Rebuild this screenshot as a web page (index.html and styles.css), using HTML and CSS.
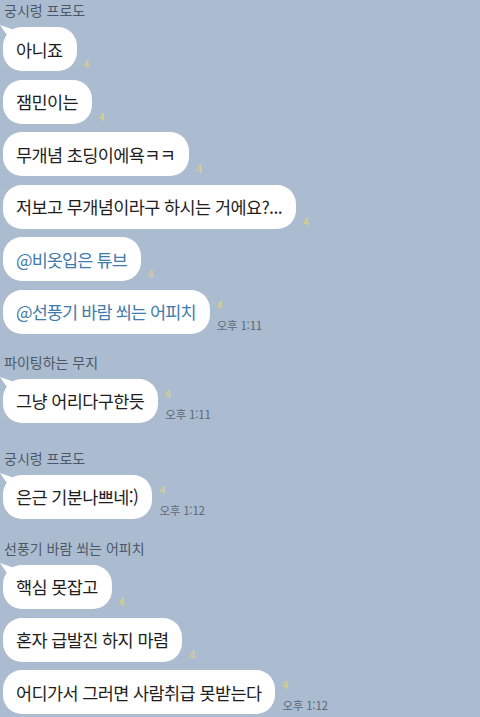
FILE: index.html
```html
<!DOCTYPE html>
<html lang="ko">
<head>
<meta charset="utf-8">
<link rel="stylesheet" href="styles.css">
</head>
<body>
<div class="chat">
  <div class="group g1">
    <div class="name">궁시렁 프로도</div>
    <div class="row tail"><div class="bubble">아니죠</div><div class="meta"><span class="read">4</span></div></div>
    <div class="row"><div class="bubble">잼민이는</div><div class="meta"><span class="read">4</span></div></div>
    <div class="row"><div class="bubble">무개념 초딩이에욕ㅋㅋ</div><div class="meta"><span class="read">4</span></div></div>
    <div class="row"><div class="bubble">저보고 무개념이라구 하시는 거에요?...</div><div class="meta"><span class="read">4</span></div></div>
    <div class="row"><div class="bubble mention">@비옷입은 튜브</div><div class="meta"><span class="read">4</span></div></div>
    <div class="row"><div class="bubble mention">@선풍기 바람 쐬는 어피치</div><div class="meta"><span class="read">4</span><span class="time">오후 1:11</span></div></div>
  </div>
  <div class="group g2">
    <div class="name">파이팅하는 무지</div>
    <div class="row tail"><div class="bubble">그냥 어리다구한듯</div><div class="meta"><span class="read">4</span><span class="time">오후 1:11</span></div></div>
  </div>
  <div class="group g3">
    <div class="name">궁시렁 프로도</div>
    <div class="row tail"><div class="bubble">은근 기분나쁘네:)</div><div class="meta"><span class="read">4</span><span class="time">오후 1:12</span></div></div>
  </div>
  <div class="group g4">
    <div class="name">선풍기 바람 쐬는 어피치</div>
    <div class="row tail"><div class="bubble">핵심 못잡고</div><div class="meta"><span class="read">4</span></div></div>
    <div class="row"><div class="bubble">혼자 급발진 하지 마렴</div><div class="meta"><span class="read">4</span></div></div>
    <div class="row"><div class="bubble">어디가서 그러면 사람취급 못받는다</div><div class="meta"><span class="read">4</span><span class="time">오후 1:12</span></div></div>
  </div>
</div>
</body>
</html>
```
FILE: styles.css
```css
html, body {
  margin: 0;
  padding: 0;
  background: #abbcd0;
  height: 100%;
  overflow: hidden;
}
body {
  font-family: "Noto Sans CJK KR", "Noto Sans", sans-serif;
  color: #222;
}
.chat {
  display: flex;
  flex-direction: column;
  align-items: flex-start;
  padding: 0 0 0 3px;
}
.group {
  display: flex;
  flex-direction: column;
  align-items: flex-start;
  gap: 8.6px;
}
.g2 { margin-top: 18px; }
.g3 { margin-top: 25px; }
.g4 { margin-top: 19px; }
.name {
  font-size: 14px;
  line-height: 20px;
  color: #4d5866;
  padding-left: 1px;
  margin-bottom: -1.6px;
}
.row {
  display: flex;
  align-items: flex-end;
  gap: 7px;
  position: relative;
}
.bubble {
  background: #fff;
  border-radius: 19px;
  height: 44px;
  box-sizing: border-box;
  padding: 0 14px 0 13px;
  display: flex;
  align-items: center;
  font-size: 17.5px;
  letter-spacing: -0.6px;
  color: #1e1e1e;
  white-space: nowrap;
}
.bubble.mention {
  color: #3f7bab;
  letter-spacing: -0.9px;
}
.row.tail::before {
  content: "";
  position: absolute;
  left: -3px;
  top: -2px;
  width: 14px;
  height: 12px;
  background: #fff;
  clip-path: polygon(0 0, 100% 40%, 60% 100%);
}
.meta {
  display: flex;
  flex-direction: column;
  padding-bottom: 1px;
}
.read {
  font-size: 10.5px;
  line-height: 12px;
  color: #e3d27a;
}
.time {
  font-size: 11.5px;
  line-height: 16px;
  color: #5a6877;
  margin-top: 6px;
  letter-spacing: -0.2px;
}
```
